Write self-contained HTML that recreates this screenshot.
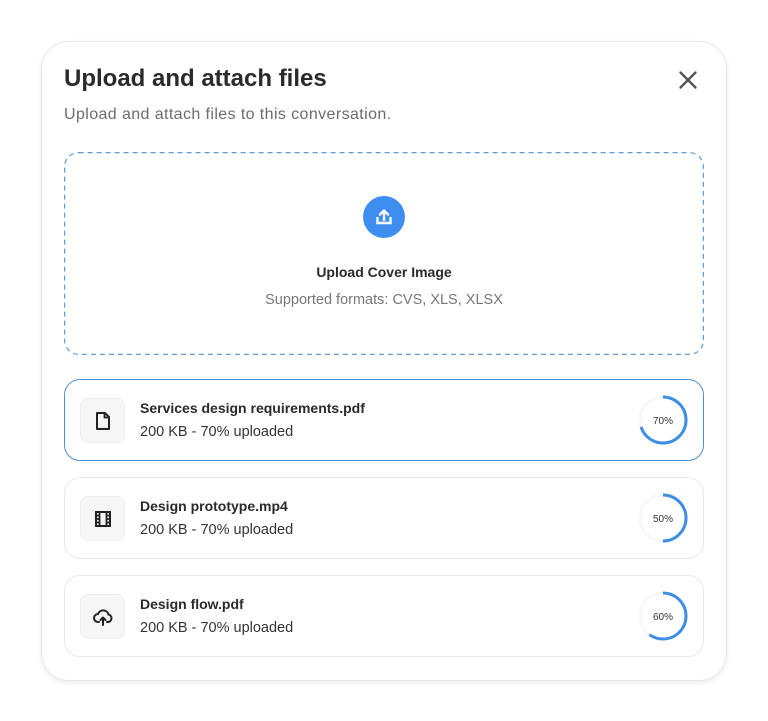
<!DOCTYPE html>
<html><head><style>
*{box-sizing:border-box;margin:0;padding:0}
body{width:768px;height:721px;background:#fff;font-family:"Liberation Sans",sans-serif;position:relative;overflow:hidden}
.card{position:absolute;left:41px;top:41px;width:686px;height:640px;border:1px solid #e6e6e6;border-radius:28px;box-shadow:0 2px 6px rgba(0,0,0,.08)}
h1{position:absolute;left:64px;top:65px;font-size:24px;font-weight:600;color:#2a2a2a}
.sub{position:absolute;left:64px;top:106px;font-size:16px;letter-spacing:.4px;color:#6b6b6b}
.x{position:absolute;left:676px;top:68px}
.drop{position:absolute;left:64px;top:152px;width:640px;height:203px;border-radius:14px}
.up{position:absolute;left:363px;top:196px;width:42px;height:42px;border-radius:50%;background:#3e8ef2}
.t1{position:absolute;left:0;width:768px;text-align:center;top:264px;font-size:14px;font-weight:700;color:#2a2a2a}
.t2{position:absolute;left:0;width:768px;text-align:center;top:292px;font-size:14.5px;color:#777}
.item{position:absolute;left:64px;width:640px;height:82px;border:1px solid #e8e8e8;border-radius:16px}
.item.a{border-color:#4a8fd6}
.ic{position:absolute;left:15px;top:18px;width:45px;height:45px;border:1px solid #eee;background:#f6f6f6;border-radius:8px;display:flex;align-items:center;justify-content:center}
.n{position:absolute;left:75px;top:20px;font-size:14px;font-weight:700;color:#2a2a2a}
.s{position:absolute;left:75px;top:44px;font-size:14.5px;color:#333}
.ring{position:absolute;left:572px;top:14px}
</style></head><body>
<div class="card"></div>
<h1>Upload and attach files</h1>
<div class="sub">Upload and attach files to this conversation.</div>
<svg class="x" width="24" height="24" viewBox="0 0 24 24"><path d="M4.5 4.5L19.5 19.5M19.5 4.5L4.5 19.5" stroke="#555" stroke-width="2.4" stroke-linecap="round"/></svg>
<svg class="drop" width="640" height="203"><rect x="0.6" y="0.6" width="638.8" height="201.8" rx="14" fill="none" stroke="#5b9bd8" stroke-width="1.2" stroke-dasharray="5 4"/></svg>
<div class="up"><svg width="42" height="42" viewBox="0 0 42 42"><path d="M21 24V15M17 18.5L21 14.5L25 18.5" stroke="#fff" stroke-width="2.4" fill="none" stroke-linecap="round" stroke-linejoin="round"/><path d="M14.5 22V27H27.5V22" stroke="#fff" stroke-width="2.4" fill="none" stroke-linecap="round"/></svg></div>
<div class="t1">Upload Cover Image</div>
<div class="t2">Supported formats: CVS, XLS, XLSX</div>

<div class="item a" style="top:379px">
<div class="ic"><svg width="20" height="20" viewBox="0 0 20 20"><path d="M4 2H12L16 6V18H4Z" stroke="#222" stroke-width="2" fill="none" stroke-linejoin="round"/><path d="M11.5 2.5V6.5H15.5" stroke="#222" stroke-width="1.8" fill="none"/></svg></div>
<div class="n">Services design requirements.pdf</div><div class="s">200 KB - 70% uploaded</div>
<svg class="ring" width="52" height="52" viewBox="0 0 52 52"><circle cx="26" cy="26" r="23" stroke="#f7f7f7" stroke-width="3" fill="none"/><circle cx="26" cy="26" r="23" stroke="#3f8ee6" stroke-width="3" fill="none" stroke-dasharray="101.2 200" transform="rotate(-90 26 26)"/><text x="26" y="30" font-size="10" text-anchor="middle" fill="#333" font-family="Liberation Sans">70%</text></svg>
</div>
<div class="item" style="top:477px">
<div class="ic"><svg width="20" height="20" viewBox="0 0 20 20"><rect x="3" y="3" width="14" height="14" stroke="#222" stroke-width="2" fill="none"/><path d="M6.5 3V17M13.5 3V17M3 6.5H6.5M3 10H6.5M3 13.5H6.5M13.5 6.5H17M13.5 10H17M13.5 13.5H17" stroke="#222" stroke-width="1.8"/></svg></div>
<div class="n">Design prototype.mp4</div><div class="s">200 KB - 70% uploaded</div>
<svg class="ring" width="52" height="52" viewBox="0 0 52 52"><circle cx="26" cy="26" r="23" stroke="#f7f7f7" stroke-width="3" fill="none"/><circle cx="26" cy="26" r="23" stroke="#3f8ee6" stroke-width="3" fill="none" stroke-dasharray="72.3 200" transform="rotate(-90 26 26)"/><text x="26" y="30" font-size="10" text-anchor="middle" fill="#333" font-family="Liberation Sans">50%</text></svg>
</div>
<div class="item" style="top:575px">
<div class="ic"><svg width="22" height="22" viewBox="0 0 22 22"><path d="M7 16H6A4 4 0 0 1 6 8A5.5 5.5 0 0 1 16.5 8.5A3.8 3.8 0 0 1 16 16H15" stroke="#222" stroke-width="2" fill="none" stroke-linecap="round"/><path d="M11 19V11.5M8.5 14L11 11.5L13.5 14" stroke="#222" stroke-width="2" fill="none" stroke-linecap="round" stroke-linejoin="round"/></svg></div>
<div class="n">Design flow.pdf</div><div class="s">200 KB - 70% uploaded</div>
<svg class="ring" width="52" height="52" viewBox="0 0 52 52"><circle cx="26" cy="26" r="23" stroke="#f7f7f7" stroke-width="3" fill="none"/><circle cx="26" cy="26" r="23" stroke="#3f8ee6" stroke-width="3" fill="none" stroke-dasharray="86.7 200" transform="rotate(-90 26 26)"/><text x="26" y="30" font-size="10" text-anchor="middle" fill="#333" font-family="Liberation Sans">60%</text></svg>
</div>
</body></html>
